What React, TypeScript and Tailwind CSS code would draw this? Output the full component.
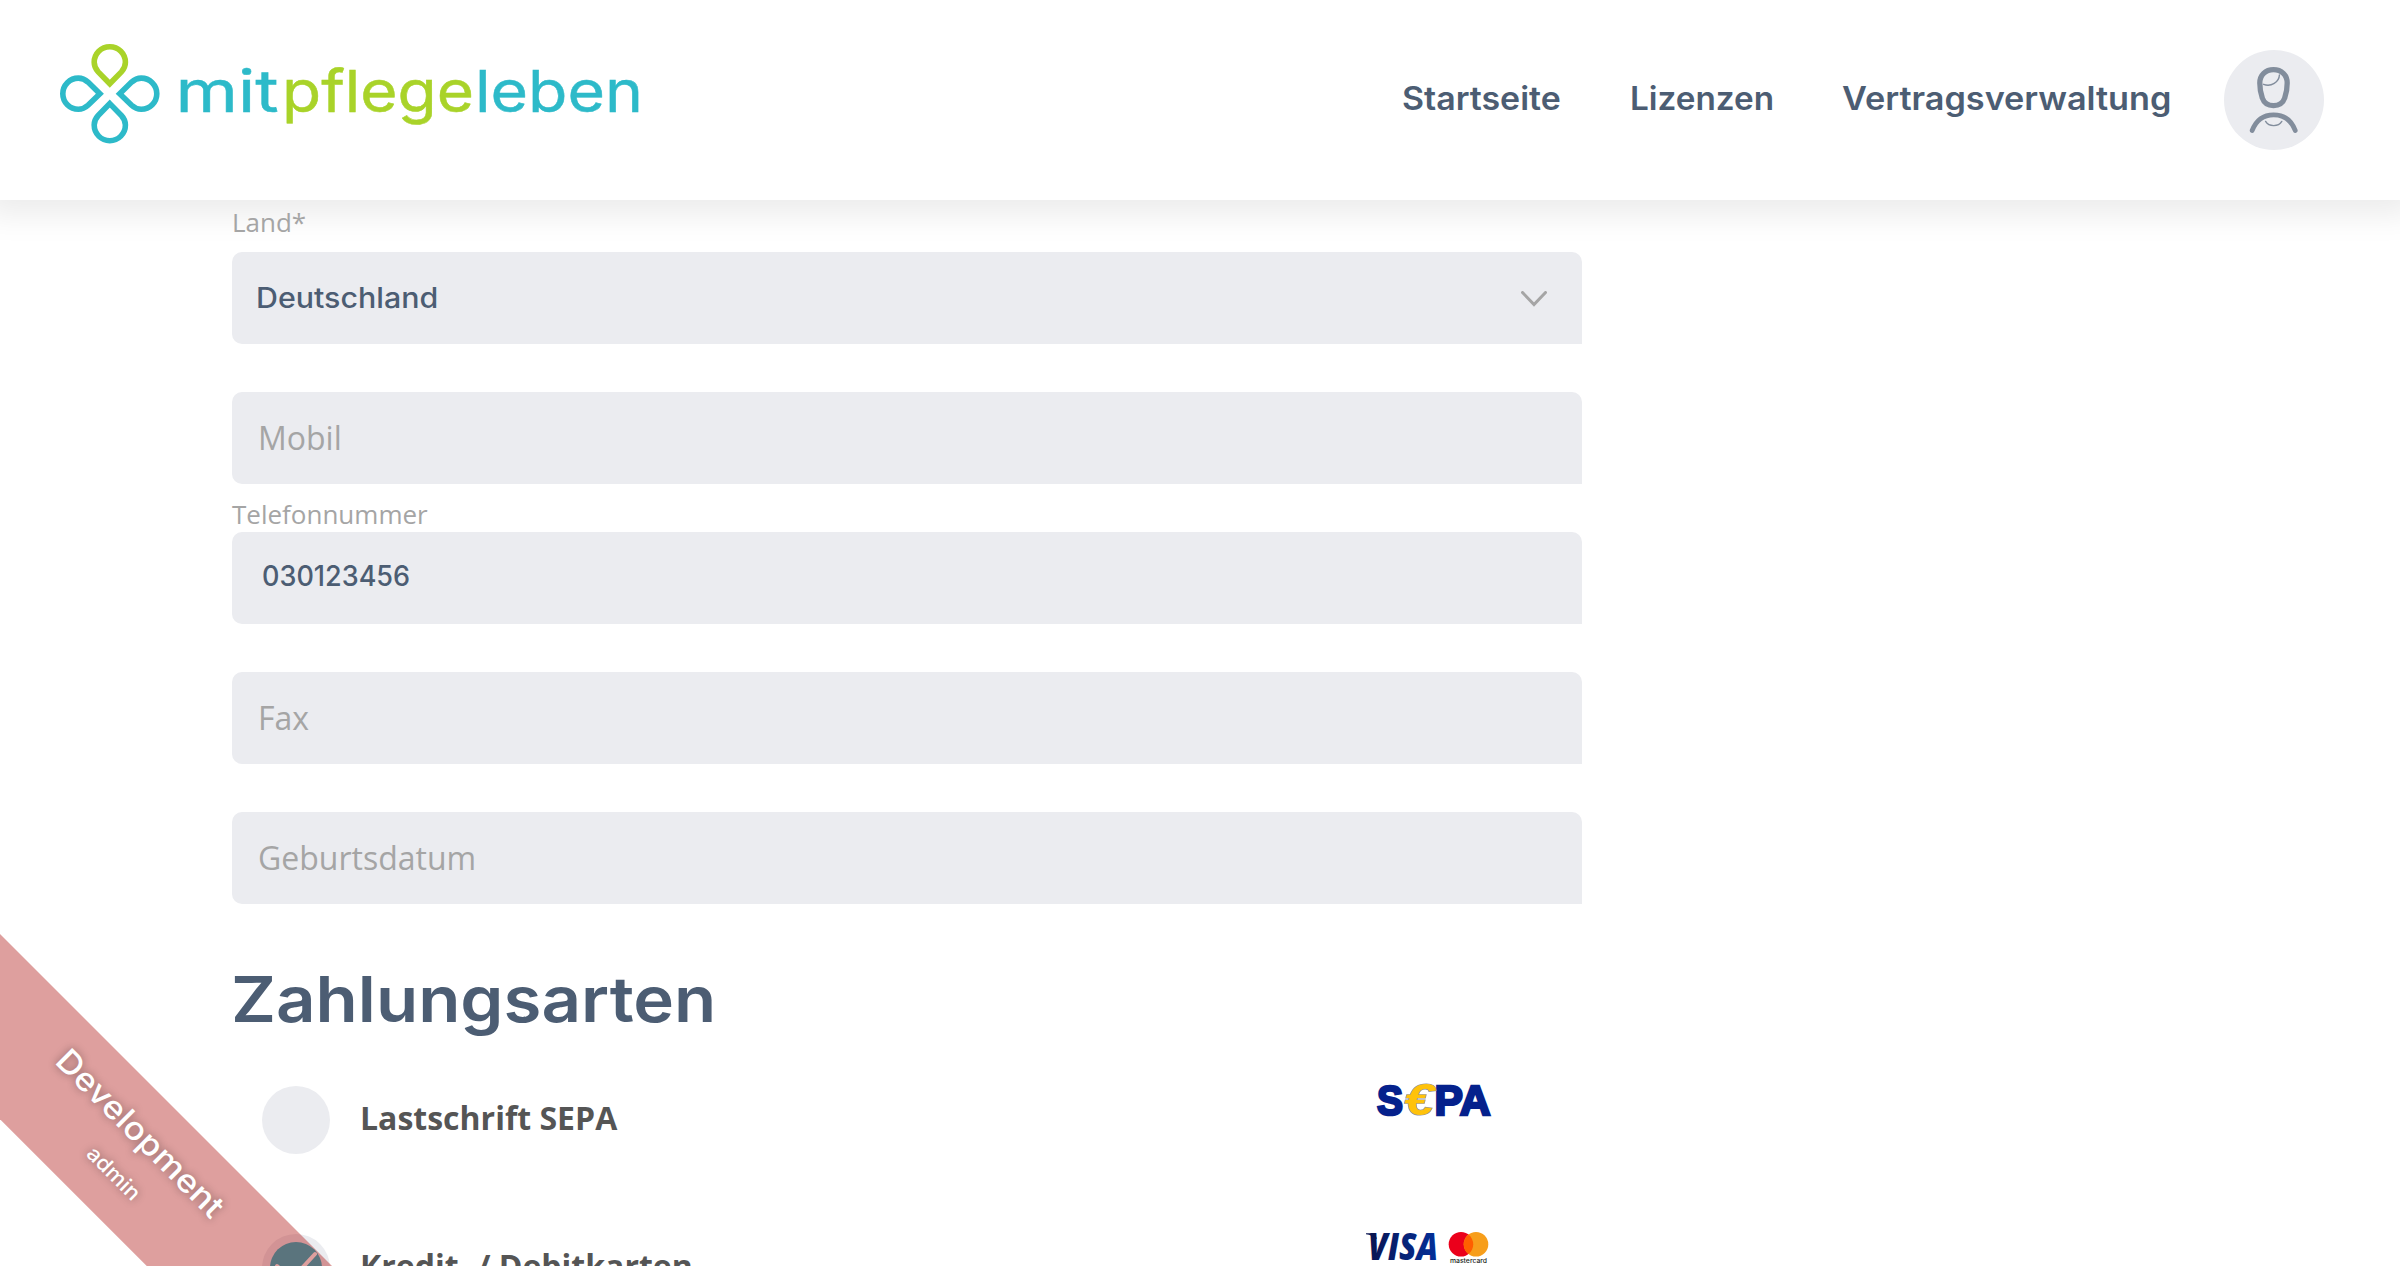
import React from "react";

const PETAL =
  "M0 -9.9 L-11.6 -21.8 C-14.2 -24.6 -15.6 -27.8 -15.6 -31.4 A15.6 15.6 0 0 1 15.6 -31.4 C15.6 -27.8 14.2 -24.6 11.6 -21.8 Z";

function Logo() {
  return (
    <svg width="590" height="110" viewBox="56 40 590 110" className="overflow-visible" role="img" aria-label="mitpflegeleben">
      <g transform="translate(109.8 93.7)" fill="none" strokeWidth="5.6">
        <path d={PETAL} stroke="#a9d329" />
        <path d={PETAL} stroke="#2dbac9" transform="rotate(90)" />
        <path d={PETAL} stroke="#2dbac9" transform="rotate(180)" />
        <path d={PETAL} stroke="#2dbac9" transform="rotate(270)" />
      </g>
      <g fontFamily="Inter, sans-serif" fontSize="58" fontWeight="400" strokeWidth="0.5">
        <text x="175.5" y="112" fill="#2dbac9" stroke="#2dbac9" textLength="103" lengthAdjust="spacingAndGlyphs">mit</text>
        <text x="282" y="112" fill="#a9d329" stroke="#a9d329" textLength="192" lengthAdjust="spacingAndGlyphs">pflege</text>
        <text x="475" y="112" fill="#2dbac9" stroke="#2dbac9" textLength="168" lengthAdjust="spacingAndGlyphs">leben</text>
      </g>
    </svg>
  );
}

function Avatar() {
  return (
    <div className="size-[100px] rounded-full bg-[#ebecf0]">
      <svg viewBox="24 20 100 100" className="size-full" fill="none" stroke="#828d9c" strokeLinecap="round">
        <path
          strokeWidth="5.3"
          d="M59.8 53 C59.8 45 65.5 39.7 73.5 39.7 S87.2 45 87.2 53 C87.2 56.5 86 64.5 84.7 68 C83 73 79 75.6 73.5 75.6 S64 73 62.3 68 C61 64.5 59.8 56.5 59.8 53 Z"
        />
        <path strokeWidth="4.8" d="M52.2 100.4 C56 90.5 63.5 84.8 73.6 84.8 S91.3 90.5 95.2 100.4" />
        <path strokeWidth="1.4" d="M79.4 45 C79.2 52 71 57.2 63.6 54.3" />
        <path strokeWidth="1.4" d="M65.6 91.4 C69 97 78.4 97 81.8 91.4" />
      </svg>
    </div>
  );
}

function Header() {
  return (
    <header className="relative z-10 flex h-[200px] items-start justify-between bg-white pt-10 pr-[76px] pl-14 shadow-[0_0_30px_15px_rgba(0,0,0,0.08)]">
      <Logo />
      <nav className="flex items-center pt-2.5 font-[Inter,sans-serif] text-[32px] font-semibold text-[#4c5d73]">
        <div className="-ml-px w-[228px] pb-[3px]">
          <a className="inline-block origin-left scale-x-[1.06]">Startseite</a>
        </div>
        <div className="w-[212px] pb-[3px]">
          <a className="inline-block origin-left scale-x-[1.04]">Lizenzen</a>
        </div>
        <div className="w-[382px] pb-[3px]">
          <a className="inline-block origin-left scale-x-[1.07]">Vertragsverwaltung</a>
        </div>
        <Avatar />
      </nav>
    </header>
  );
}

const BOX = "flex h-[92px] items-center rounded-[10px] rounded-br-none bg-[#ebecf0]";
const LABEL = "relative z-20 flex h-12 items-end text-[26px] leading-[30px] text-[#a5a5a5]";

function EmptyField({ name }: { name: string }) {
  return (
    <div className="pt-12">
      <div className={BOX}>
        <span className="pl-[26px] text-[32px] text-[#a5a5a5]">{name}</span>
      </div>
    </div>
  );
}

function SepaLogo() {
  return (
    <svg width="118" height="36" viewBox="1376 1082 118 36" className="-mt-1 overflow-visible">
      <g fontFamily="Liberation Sans, sans-serif" fontWeight="700" fontSize="43" fill="#05218c" stroke="#05218c" strokeWidth="2.6">
        <text x="1379" y="1114.5" textLength="26" lengthAdjust="spacingAndGlyphs">S</text>
        <text x="1436.5" y="1114.5" textLength="56" lengthAdjust="spacingAndGlyphs">PA</text>
        <text x="1406" y="1115" fill="#ffc20a" stroke="#8e8e96" strokeWidth="1.2" paintOrder="stroke" textLength="30" lengthAdjust="spacingAndGlyphs" fontStyle="italic" fontSize="45">€</text>
      </g>
    </svg>
  );
}

function CardLogos() {
  return (
    <svg width="128" height="36" viewBox="1364 1230 128 36" className="-mt-1 overflow-visible">
      <defs>
        <linearGradient id="visa" x1="0" x2="1">
          <stop offset="0" stopColor="#0a1450" />
          <stop offset="1" stopColor="#03309b" />
        </linearGradient>
      </defs>
      <text x="1368" y="1259.5" fontFamily="Open Sans, sans-serif" fontWeight="800" fontStyle="italic" fontSize="37" fill="url(#visa)" textLength="70" lengthAdjust="spacingAndGlyphs">VISA</text>
      <path d="M1366 1233.3 h9 l2 6 C1374 1236.5 1370 1234.8 1366 1234.3 Z" fill="#0a1450" />
      <circle cx="1461" cy="1244.3" r="12.3" fill="#eb001b" />
      <circle cx="1476" cy="1244.3" r="12.3" fill="#f79e1b" />
      <path d="M1468.5 1234.6 a12.3 12.3 0 0 1 0 19.4 a12.3 12.3 0 0 1 0 -19.4 Z" fill="#ff5f00" />
      <text x="1450" y="1262.5" fontFamily="Inter, sans-serif" fontWeight="500" fontSize="6.6" fill="#231f20" textLength="37" lengthAdjust="spacingAndGlyphs">mastercard</text>
    </svg>
  );
}

function PaymentRow({ name, checked, children }: { name: string; checked?: boolean; children: React.ReactNode }) {
  return (
    <div className="flex h-[148px] items-start pr-[90px] pl-[30px]">
      <div className="flex size-[68px] shrink-0 items-center justify-center rounded-full bg-[#ebecf0]">
        {checked && (
          <svg viewBox="0 0 52 52" className="size-[52px]">
            <circle cx="26" cy="26" r="26" fill="#23b7c8" />
            <path d="M7 24 L22 37 L45 12" fill="none" stroke="#fff" strokeWidth="4" strokeLinecap="round" />
          </svg>
        )}
      </div>
      <span className="mr-auto ml-[30px] pt-[9px] text-[32px] leading-[45px] font-bold text-[#555555]">{name}</span>
      {children}
    </div>
  );
}

function Ribbon() {
  return (
    <div className="absolute top-[934px] left-0 z-20 flex h-[131px] w-[481px] origin-top-left rotate-45 flex-col items-center bg-[rgba(172,15,13,0.4)] pt-[21px] font-[Inter,sans-serif] font-medium text-white [text-shadow:0_0_8px_rgba(0,0,0,0.4)]">
      <span className="scale-x-[1.1] text-[32px] leading-[42px]">Development</span>
      <span className="ml-[18px] scale-x-[1.08] pt-1 text-[21px] leading-[44px]">admin</span>
    </div>
  );
}

export default function App() {
  return (
    <div className="relative h-[1266px] w-[2400px] overflow-hidden bg-white font-['Open_Sans',sans-serif]">
      <Header />
      <main className="ml-[232px] w-[1350px] pt-1">
        <div>
          <div className={LABEL + " pb-[15px]"}>Land*</div>
          <div className={BOX + " justify-between pr-[35px] pl-6"}>
            <span className="origin-left scale-x-[1.085] font-[Inter,sans-serif] text-[28px] font-medium text-[#4c5d73]">Deutschland</span>
            <svg width="26" height="16" viewBox="0 0 26 16" className="mt-0.5" fill="none" stroke="#a5a5a5" strokeWidth="3" strokeLinecap="round">
              <path d="M1.5 1.5 L13 13.5 L24.5 1.5" />
            </svg>
          </div>
        </div>
        <EmptyField name="Mobil" />
        <div>
          <div className={LABEL + " pb-[3px]"}>Telefonnummer</div>
          <div className={BOX}>
            <span className="ml-[30px] origin-left scale-x-[0.965] pb-1 font-[Inter,sans-serif] text-[28px] font-medium text-[#4c5d73]">030123456</span>
          </div>
        </div>
        <EmptyField name="Fax" />
        <EmptyField name="Geburtsdatum" />
        <h1 className="-ml-px mt-[55px] mb-[47px] origin-left scale-x-[1.095] font-[Inter,sans-serif] text-[63px] leading-[80px] font-semibold text-[#4c5d73]">Zahlungsarten</h1>
        <PaymentRow name="Lastschrift SEPA">
          <SepaLogo />
        </PaymentRow>
        <PaymentRow name="Kredit- / Debitkarten" checked>
          <CardLogos />
        </PaymentRow>
      </main>
      <Ribbon />
    </div>
  );
}
